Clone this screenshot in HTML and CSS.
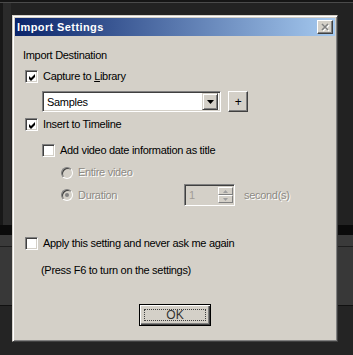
FILE: index.html
```html
<!DOCTYPE html>
<html>
<head>
<meta charset="utf-8">
<link rel="stylesheet" href="styles.css">
</head>
<body>
<div class="desk">
  <div class="dialog">
    <div class="titlebar">
      <span class="title">Import Settings</span>
      <span class="close">
        <svg width="10" height="9" viewBox="0 0 10 9">
          <path d="M2 2 L8 8 M8 2 L2 8" stroke="#fff" stroke-width="1.6"/>
          <path d="M1 1 L7 7 M7 1 L1 7" stroke="#808080" stroke-width="1.6"/>
        </svg>
      </span>
    </div>
    <div class="content">
      <div class="label">Import Destination</div>
      <div class="row r-capture">
        <span class="cb"><svg width="9" height="9" viewBox="0 0 9 9"><polygon points="1,3 3,5 7,1 7,4 3,8 1,6" fill="#000"/></svg></span>
        <span>Capture to <u>L</u>ibrary</span>
      </div>
      <div class="combo-row">
        <div class="combo">
          <span class="combo-text">Samples</span>
          <span class="combo-btn"><svg width="7" height="4" viewBox="0 0 7 4"><polygon points="0,0 7,0 3.5,4" fill="#000"/></svg></span>
        </div>
        <div class="plus">+</div>
      </div>
      <div class="row r-insert">
        <span class="cb"><svg width="9" height="9" viewBox="0 0 9 9"><polygon points="1,3 3,5 7,1 7,4 3,8 1,6" fill="#000"/></svg></span>
        <span>Insert to Timeline</span>
      </div>
      <div class="row r-add">
        <span class="cb"></span>
        <span>Add video date information as title</span>
      </div>
      <div class="row r-radio1 disabled">
        <span class="radio"></span>
        <span>Entire video</span>
      </div>
      <div class="row r-radio2 disabled">
        <span class="radio-label">
          <span class="radio"><span class="dot"></span></span>
          <span>Duration</span>
        </span>
        <span class="spin">
          <span class="spin-text">1</span>
          <span class="spin-btns">
            <span class="sbtn"><svg width="5" height="3" viewBox="0 0 5 3"><polygon points="0,3 5,3 2.5,0" fill="#a0a0a0"/></svg></span>
            <span class="sbtn"><svg width="5" height="3" viewBox="0 0 5 3"><polygon points="0,0 5,0 2.5,3" fill="#a0a0a0"/></svg></span>
          </span>
        </span>
        <span class="unit">second(s)</span>
      </div>
      <div class="row r-apply">
        <span class="cb"></span>
        <span>Apply this setting and never ask me again</span>
      </div>
      <div class="note">(Press F6 to turn on the settings)</div>
      <div class="ok"><span class="focus">OK</span></div>
    </div>
  </div>
</div>
</body>
</html>
```
FILE: styles.css
```css
html, body {
  margin: 0;
  padding: 0;
}
body {
  width: 353px;
  height: 355px;
  overflow: hidden;
  font-family: "Liberation Sans", Arial, sans-serif;
  font-size: 11px;
  color: #000;
}
.desk {
  position: relative;
  width: 353px;
  height: 355px;
  background:
    linear-gradient(to right, #181818 0 3px, #2b2b2b 3px 11px, transparent 11px) 0 3px / 12px 222px no-repeat,
    linear-gradient(to bottom, #151515 0 2px, #4a4a4a 2px 3px, #222 3px 225px, #0b0b0b 225px 235px, #3a3a3a 235px 246px, #1e1e1e 246px 247px, #383838 247px 305px, #111 305px 306px, #242424 306px);
}
.dialog {
  position: absolute;
  left: 12px;
  top: 15px;
  width: 326px;
  height: 327px;
  box-sizing: border-box;
  background: #d4d0c8;
  border: 1px solid;
  border-color: #d4d0c8 #404040 #404040 #d4d0c8;
  box-shadow: inset 1px 1px 0 #fff, inset -1px -1px 0 #808080;
}
.titlebar {
  margin: 2px 2px 0 2px;
  height: 18px;
  background: linear-gradient(to right, #0a246a, #a6caf0);
  display: flex;
  align-items: center;
  justify-content: space-between;
}
.title {
  color: #fff;
  font-weight: bold;
  font-size: 11px;
  letter-spacing: 0.4px;
  padding-left: 2px;
}
.close {
  width: 16px;
  height: 14px;
  box-sizing: border-box;
  margin-right: 2px;
  background: #d4d0c8;
  border: 1px solid;
  border-color: #fff #404040 #404040 #fff;
  box-shadow: inset -1px -1px 0 #808080;
  display: flex;
  align-items: center;
  justify-content: center;
}
.close svg { display: block; margin-left: 1px; }
.content {
  display: flex;
  flex-direction: column;
  align-items: flex-start;
  letter-spacing: -0.3px;
}
.label {
  margin: 13px 0 0 10px;
  line-height: 13px;
}
.row {
  display: flex;
  align-items: center;
  gap: 5px;
  line-height: 13px;
  height: 13px;
}
.cb {
  width: 13px;
  height: 13px;
  box-sizing: border-box;
  background: #fff;
  border: 1px solid;
  border-color: #808080 #fff #fff #808080;
  box-shadow: inset 1px 1px 0 #404040, inset -1px -1px 0 #d4d0c8;
  display: flex;
  align-items: center;
  justify-content: center;
  flex: none;
}
.cb svg { display: block; margin: 1px 0 0 1px; }
.r-capture { margin: 8px 0 0 12px; }
.combo-row {
  margin: 8px 0 0 29px;
  display: flex;
  gap: 7px;
  height: 21px;
}
.combo {
  width: 179px;
  height: 21px;
  box-sizing: border-box;
  background: #fff;
  border: 1px solid;
  border-color: #808080 #fff #fff #808080;
  box-shadow: inset 1px 1px 0 #404040, inset -1px -1px 0 #d4d0c8;
  display: flex;
  align-items: center;
  justify-content: space-between;
  padding: 2px;
}
.combo-text {
  padding-left: 2px;
}
.combo-btn {
  width: 16px;
  height: 17px;
  box-sizing: border-box;
  background: #d4d0c8;
  border: 1px solid;
  border-color: #d4d0c8 #404040 #404040 #d4d0c8;
  box-shadow: inset 1px 1px 0 #fff, inset -1px -1px 0 #808080;
  display: flex;
  align-items: center;
  justify-content: center;
}
.combo-btn svg { display: block; }
.plus {
  width: 20px;
  height: 21px;
  box-sizing: border-box;
  background: #d4d0c8;
  border: 1px solid;
  border-color: #fff #404040 #404040 #fff;
  box-shadow: inset -1px -1px 0 #808080;
  display: flex;
  align-items: center;
  justify-content: center;
  font-size: 12px;
  line-height: 1;
}
.r-insert { margin: 6px 0 0 12px; }
.r-add { margin: 13px 0 0 29px; }
.disabled { color: #8d8a84; text-shadow: 1px 1px 0 #fff; }
.radio {
  width: 12px;
  height: 12px;
  box-sizing: border-box;
  border-radius: 50%;
  background: #d4d0c8;
  border: 1px solid;
  border-color: #808080 #fff #fff #808080;
  box-shadow: inset 1px 1px 0 #404040, inset -1px -1px 0 #d4d0c8;
  display: flex;
  align-items: center;
  justify-content: center;
  flex: none;
}
.dot {
  width: 4px;
  height: 4px;
  border-radius: 50%;
  background: #808080;
}
.r-radio1 { margin: 9px 0 0 48px; gap: 5px; }
.r-radio2 {
  margin: 5px 0 0 48px;
  height: 22px;
  gap: 0;
}
.radio-label {
  width: 123px;
  display: flex;
  align-items: center;
  gap: 5px;
}
.spin {
  width: 51px;
  height: 22px;
  box-sizing: border-box;
  background: #d4d0c8;
  border: 1px solid;
  border-color: #808080 #fff #fff #808080;
  box-shadow: inset 1px 1px 0 #404040, inset -1px -1px 0 #d4d0c8;
  display: flex;
  justify-content: space-between;
  padding: 2px 1px 2px 2px;
  text-shadow: none;
}
.spin-text {
  color: #a09c96;
  padding-left: 2px;
  line-height: 16px;
}
.spin-btns {
  width: 15px;
  display: flex;
  flex-direction: column;
}
.sbtn {
  flex: 1;
  box-sizing: border-box;
  background: #d4d0c8;
  border: 1px solid;
  border-color: #fff #808080 #808080 #fff;
  display: flex;
  align-items: center;
  justify-content: center;
}
.sbtn svg { display: block; }
.unit { margin-left: 9px; }
.r-apply { margin: 31px 0 0 12px; }
.note {
  margin: 14px 0 0 28px;
  line-height: 13px;
}
.ok {
  align-self: center;
  margin-top: 27px;
  width: 72px;
  height: 22px;
  box-sizing: border-box;
  background: #d4d0c8;
  border: 1px solid #000;
  box-shadow: inset 1px 1px 0 #fff, inset -1px -1px 0 #404040, inset -2px -2px 0 #808080;
  padding: 4px;
  display: flex;
}
.focus {
  flex: 1;
  border: 1px dotted #404040;
  display: flex;
  align-items: center;
  justify-content: center;
  color: #333;
  font-size: 12px;
  letter-spacing: 0;
}
```
